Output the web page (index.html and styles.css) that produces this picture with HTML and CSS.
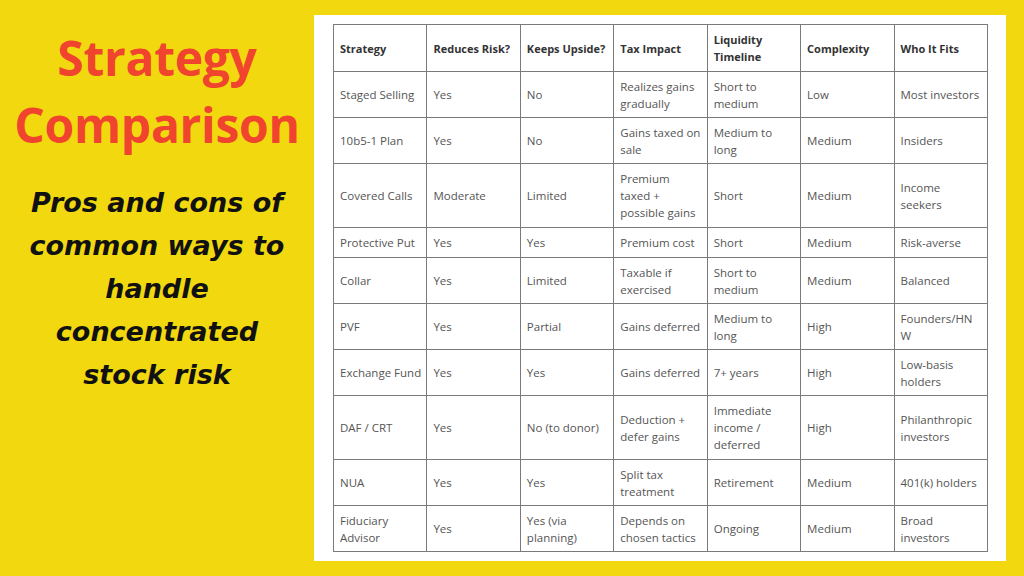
FILE: index.html
```html
<!DOCTYPE html>
<html>
<head>
<meta charset="utf-8">
<link rel="stylesheet" href="styles.css">
</head>
<body>
<div class="page">
  <div class="left">
    <h1 class="title">Strategy<br>Comparison</h1>
    <p class="subtitle">Pros and cons of<br>common ways to<br>handle<br>concentrated<br>stock risk</p>
  </div>
  <div class="panel">
    <table class="grid">
      <thead>
        <tr class="r2"><th>Strategy</th><th>Reduces Risk?</th><th>Keeps Upside?</th><th>Tax Impact</th><th>Liquidity Timeline</th><th>Complexity</th><th>Who It Fits</th></tr>
      </thead>
      <tbody>
        <tr class="r2"><td>Staged Selling</td><td>Yes</td><td>No</td><td>Realizes gains gradually</td><td>Short to medium</td><td>Low</td><td>Most investors</td></tr>
        <tr class="r2"><td>10b5-1 Plan</td><td>Yes</td><td>No</td><td>Gains taxed on sale</td><td>Medium to long</td><td>Medium</td><td>Insiders</td></tr>
        <tr class="r3"><td>Covered Calls</td><td>Moderate</td><td>Limited</td><td>Premium<br>taxed +<br>possible gains</td><td>Short</td><td>Medium</td><td>Income seekers</td></tr>
        <tr class="r1"><td>Protective Put</td><td>Yes</td><td>Yes</td><td>Premium cost</td><td>Short</td><td>Medium</td><td>Risk-averse</td></tr>
        <tr class="r2"><td>Collar</td><td>Yes</td><td>Limited</td><td>Taxable if exercised</td><td>Short to medium</td><td>Medium</td><td>Balanced</td></tr>
        <tr class="r2"><td>PVF</td><td>Yes</td><td>Partial</td><td>Gains deferred</td><td>Medium to long</td><td>High</td><td>Founders/HN<br>W</td></tr>
        <tr class="r2"><td>Exchange Fund</td><td>Yes</td><td>Yes</td><td>Gains deferred</td><td>7+ years</td><td>High</td><td>Low-basis holders</td></tr>
        <tr class="r3"><td>DAF / CRT</td><td>Yes</td><td>No (to donor)</td><td>Deduction + defer gains</td><td>Immediate income / deferred</td><td>High</td><td>Philanthropic investors</td></tr>
        <tr class="r2"><td>NUA</td><td>Yes</td><td>Yes</td><td>Split tax treatment</td><td>Retirement</td><td>Medium</td><td>401(k) holders</td></tr>
        <tr class="r2"><td>Fiduciary Advisor</td><td>Yes</td><td>Yes (via planning)</td><td>Depends on chosen tactics</td><td>Ongoing</td><td>Medium</td><td>Broad investors</td></tr>
      </tbody>
    </table>
  </div>
</div>
</body>
</html>
```
FILE: styles.css
```css
html, body {
  margin: 0;
  padding: 0;
}
body {
  width: 1024px;
  height: 576px;
  overflow: hidden;
  background: #f2d90f;
}
.page {
  display: flex;
  align-items: flex-start;
  width: 1024px;
  height: 576px;
}
.left {
  width: 314px;
  flex: none;
  display: flex;
  flex-direction: column;
  align-items: center;
  text-align: center;
  padding-top: 24px;
}
.title {
  margin: 0;
  font-family: "Open Sans", "Liberation Sans", sans-serif;
  font-weight: 700;
  font-size: 48px;
  line-height: 67px;
  color: #f0442f;
  letter-spacing: -0.3px;
}
.subtitle {
  margin: 23px 0 0 0;
  font-family: "DejaVu Sans", "Liberation Sans", sans-serif;
  font-weight: 700;
  font-style: italic;
  font-size: 27px;
  line-height: 43px;
  color: #111;
}
.panel {
  margin-top: 15px;
  width: 654px;
  height: 528px;
  padding: 9px 19px;
  background: #fff;
  flex: none;
}
.grid {
  width: 655px;
  border-collapse: collapse;
  table-layout: fixed;
  font-family: "Open Sans", "Liberation Sans", sans-serif;
  font-size: 11.5px;
  line-height: 17px;
  color: #555;
}
.grid th, .grid td {
  border: 1px solid #7a7a7a;
  text-align: left;
  vertical-align: middle;
  padding: 0 5px 0 6px;
}
.grid th {
  font-weight: 700;
  font-size: 11px;
  color: #333;
  padding-right: 3px;
}
.r1 { height: 30px; }
.r2 { height: 46px; }
.r3 { height: 64px; }
thead .r2 { height: 47px; }
```
